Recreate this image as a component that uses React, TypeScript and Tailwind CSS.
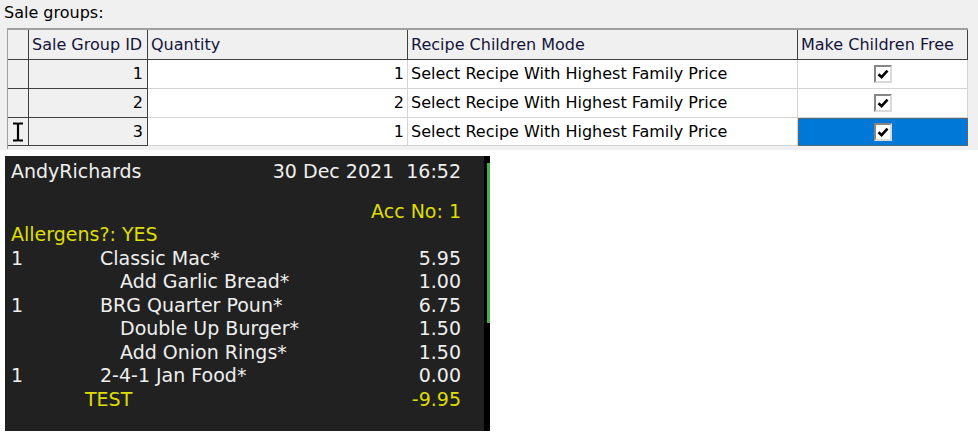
import clsx from 'clsx';

const columns = [
  { label: 'Sale Group ID', width: 'w-[119px]' },
  { label: 'Quantity', width: 'w-[260px]' },
  { label: 'Recipe Children Mode', width: 'w-[390px]' },
  { label: 'Make Children Free', width: 'w-[170px]' },
];

const saleGroups = [
  { id: 1, quantity: 1, mode: 'Select Recipe With Highest Family Price', free: true, height: 'h-[29px]' },
  { id: 2, quantity: 2, mode: 'Select Recipe With Highest Family Price', free: true, height: 'h-[29px]' },
  { id: 3, quantity: 1, mode: 'Select Recipe With Highest Family Price', free: true, height: 'h-[28px]', current: true },
];

type ReceiptLine = {
  qty?: string;
  name: string;
  price: string;
  kind?: 'item' | 'modifier' | 'total';
};

const lines: ReceiptLine[] = [
  { qty: '1', name: 'Classic Mac*', price: '5.95' },
  { name: 'Add Garlic Bread*', price: '1.00', kind: 'modifier' },
  { qty: '1', name: 'BRG Quarter Poun*', price: '6.75' },
  { name: 'Double Up Burger*', price: '1.50', kind: 'modifier' },
  { name: 'Add Onion Rings*', price: '1.50', kind: 'modifier' },
  { qty: '1', name: '2-4-1 Jan Food*', price: '0.00' },
  { name: 'TEST', price: '-9.95', kind: 'total' },
];

function Checkbox() {
  return (
    <span className="flex h-[18px] w-[18px] items-center justify-center border-2 border-t-[#858585] border-l-[#858585] border-r-[#dadada] border-b-[#dadada] bg-white">
      <svg viewBox="0 0 12 12" className="h-[12px] w-[12px]">
        <path d="M1.5 6.2 L4.6 9.2 L10.5 2.6" fill="none" stroke="#000" strokeWidth="2.6" />
      </svg>
    </span>
  );
}

function IBeam() {
  return (
    <svg viewBox="0 0 12 20" className="h-[20px] w-[12px]">
      <path d="M1 1.5 H5 L6 2.5 L7 1.5 H11 M6 2.5 V17.5 M1 18.5 H5 L6 17.5 L7 18.5 H11" fill="none" stroke="#000" strokeWidth="2.2" />
    </svg>
  );
}

function SaleGroupsGrid() {
  return (
    <div className="ml-[3px] mt-[6px] w-[961px] border-t-2 border-l border-t-[#a0a0a0] border-l-[#a0a0a0] pb-[3px]">
      <div className="flex h-[30px]">
        <div className="w-[21px] border-r border-b border-[#404040] bg-[#f0f0f0]" />
        {columns.map((col) => (
          <div
            key={col.label}
            className={clsx(col.width, 'flex items-center border-r border-b border-[#404040] bg-[#f0f0f0] pl-[3px] text-[#14143a]')}
          >
            {col.label}
          </div>
        ))}
      </div>

      {saleGroups.map((row) => (
        <div key={row.id} className={clsx('flex', row.height)}>
          <div className="flex w-[21px] items-center justify-center border-r border-b border-[#404040] bg-[#f0f0f0]">
            {row.current && <IBeam />}
          </div>
          <div className="flex w-[119px] items-center justify-end border-r border-b border-[#404040] bg-[#f0f0f0] pr-[4px]">
            {row.id}
          </div>
          <div className="flex w-[260px] items-center justify-end border-r border-b border-[#d4d4d4] bg-white pr-[3px]">
            {row.quantity}
          </div>
          <div className="flex w-[390px] items-center border-r border-b border-[#d4d4d4] bg-white pl-[3px]">
            {row.mode}
          </div>
          <div
            className={clsx(
              'flex w-[170px] items-center justify-center border-b',
              row.current
                ? 'border border-dotted border-[#9a5a20] bg-[#0078d7]'
                : 'border-r border-[#d4d4d4] bg-white'
            )}
          >
            {row.free && <Checkbox />}
          </div>
        </div>
      ))}
    </div>
  );
}

function Receipt() {
  return (
    <div className="flex h-[275px] pl-[5px]">
      <div className="w-[479px] bg-[#212121] pt-[4px] pl-[6px] pr-[23px] text-[19px] leading-[23.5px] text-[#efefef] font-['DejaVu_Sans',sans-serif]">
        <div className="flex justify-between">
          <span>AndyRichards</span>
          <span className="whitespace-pre">30 Dec 2021  16:52</span>
        </div>
        <div className="mt-[16px] text-right text-[#dede00]">Acc No: 1</div>
        <div className="text-[#dede00]">Allergens?: YES</div>
        {lines.map((line) => (
          <div key={line.name} className="flex">
            <span className="w-[89px] shrink-0">{line.qty}</span>
            <span
              className={clsx(
                line.kind === 'modifier' && 'pl-[20px]',
                line.kind === 'total' && '-ml-[15px] text-[#dede00]'
              )}
            >
              {line.name}
            </span>
            <span className={clsx('ml-auto', line.kind === 'total' && 'text-[#dede00]')}>{line.price}</span>
          </div>
        ))}
      </div>
      <div className="flex w-[6px] flex-col bg-black">
        <div className="mt-[7px] ml-[3px] h-[160px] w-[3px] bg-[#45b045]" />
      </div>
    </div>
  );
}

export default function App() {
  return (
    <div className="h-[432px] w-[978px] overflow-hidden bg-white text-[16px] text-black font-['DejaVu_Sans',sans-serif]">
      <div className="h-[150px] bg-[#f0f0f0] pt-[4px] pl-[4px]">
        <div className="leading-[18px]">Sale groups:</div>
        <SaleGroupsGrid />
      </div>
      <div className="h-[6px]" />
      <Receipt />
    </div>
  );
}
